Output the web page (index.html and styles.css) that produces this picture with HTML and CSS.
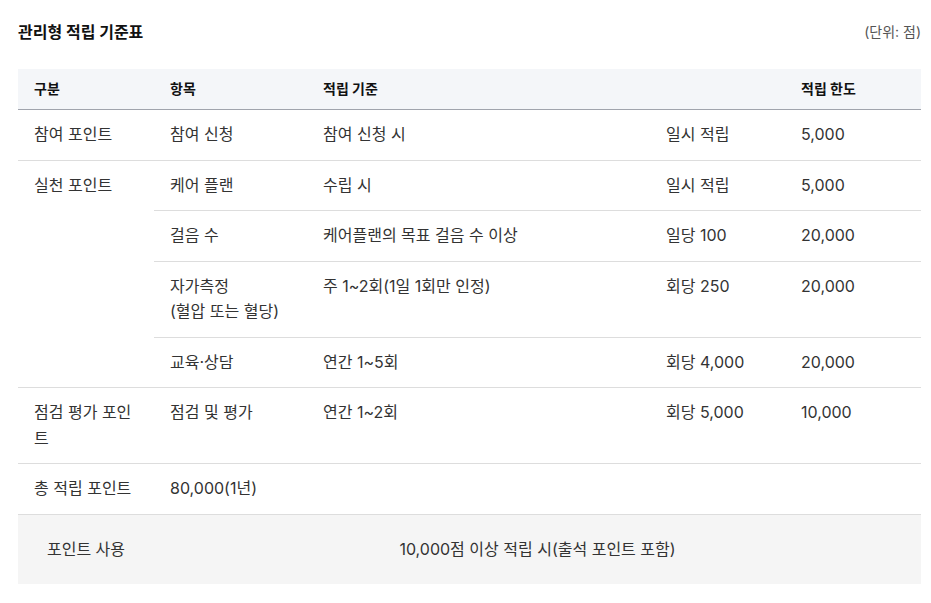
FILE: index.html
```html
<!DOCTYPE html>
<html lang="ko">
<head>
<meta charset="utf-8">
<title>관리형 적립 기준표</title>
<link rel="stylesheet" href="styles.css">
</head>
<body>
<div class="page">
  <div class="head">
    <h2 class="title">관리형 적립 기준표</h2>
    <span class="unit">(단위: 점)</span>
  </div>
  <table class="table">
    <colgroup>
      <col class="c1"><col class="c2"><col class="c3"><col class="c4"><col class="c5">
    </colgroup>
    <thead>
      <tr>
        <th>구분</th>
        <th>항목</th>
        <th>적립 기준</th>
        <th></th>
        <th>적립 한도</th>
      </tr>
    </thead>
    <tbody>
      <tr>
        <td>참여 포인트</td>
        <td>참여 신청</td>
        <td>참여 신청 시</td>
        <td>일시 적립</td>
        <td>5,000</td>
      </tr>
      <tr>
        <td rowspan="4">실천 포인트</td>
        <td>케어 플랜</td>
        <td>수립 시</td>
        <td>일시 적립</td>
        <td>5,000</td>
      </tr>
      <tr>
        <td>걸음 수</td>
        <td>케어플랜의 목표 걸음 수 이상</td>
        <td>일당 100</td>
        <td>20,000</td>
      </tr>
      <tr>
        <td>자가측정<br>(혈압 또는 혈당)</td>
        <td>주 1~2회(1일 1회만 인정)</td>
        <td>회당 250</td>
        <td>20,000</td>
      </tr>
      <tr>
        <td>교육·상담</td>
        <td>연간 1~5회</td>
        <td>회당 4,000</td>
        <td>20,000</td>
      </tr>
      <tr>
        <td>점검 평가 포인트</td>
        <td>점검 및 평가</td>
        <td>연간 1~2회</td>
        <td>회당 5,000</td>
        <td>10,000</td>
      </tr>
      <tr>
        <td>총 적립 포인트</td>
        <td colspan="4">80,000(1년)</td>
      </tr>
    </tbody>
    <tfoot>
      <tr>
        <td>포인트 사용</td>
        <td colspan="4">10,000점 이상 적립 시(출석 포인트 포함)</td>
      </tr>
    </tfoot>
  </table>
</div>
</body>
</html>
```
FILE: styles.css
```css
html, body {
  margin: 0;
  padding: 0;
  background: #ffffff;
}
body {
  font-family: Inter, "Noto Sans CJK KR", sans-serif;
  color: #333333;
}
.page {
  padding: 20px 10px 0 18px;
}
.head {
  display: flex;
  justify-content: space-between;
  align-items: center;
  height: 24px;
  margin-bottom: 25px;
}
.title {
  margin: 0;
  font-size: 16px;
  font-weight: 700;
  color: #111111;
  line-height: 24px;
}
.unit {
  font-size: 14px;
  color: #555555;
  line-height: 24px;
}
.table {
  width: 903px;
  border-collapse: collapse;
  table-layout: fixed;
  font-size: 16px;
  line-height: 25.5px;
}
.c1 { width: 136px; }
.c2 { width: 153px; }
.c3 { width: 343px; }
.c4 { width: 135px; }
.c5 { width: 136px; }
.table th {
  background: #f4f6f9;
  font-size: 14px;
  font-weight: 700;
  color: #111111;
  text-align: left;
  padding: 8px 16px 8px;
  line-height: 24px;
  border-bottom: 1px solid #a0a4ad;
}
.table td {
  padding: 12px 16px 12px;
  vertical-align: top;
  text-align: left;
  border-bottom: 1px solid #dddddd;
}
.table tfoot td {
  background: #f5f5f5;
  text-align: center;
  vertical-align: middle;
  padding: 22px 16px 22px;
  border-bottom: none;
}
```
